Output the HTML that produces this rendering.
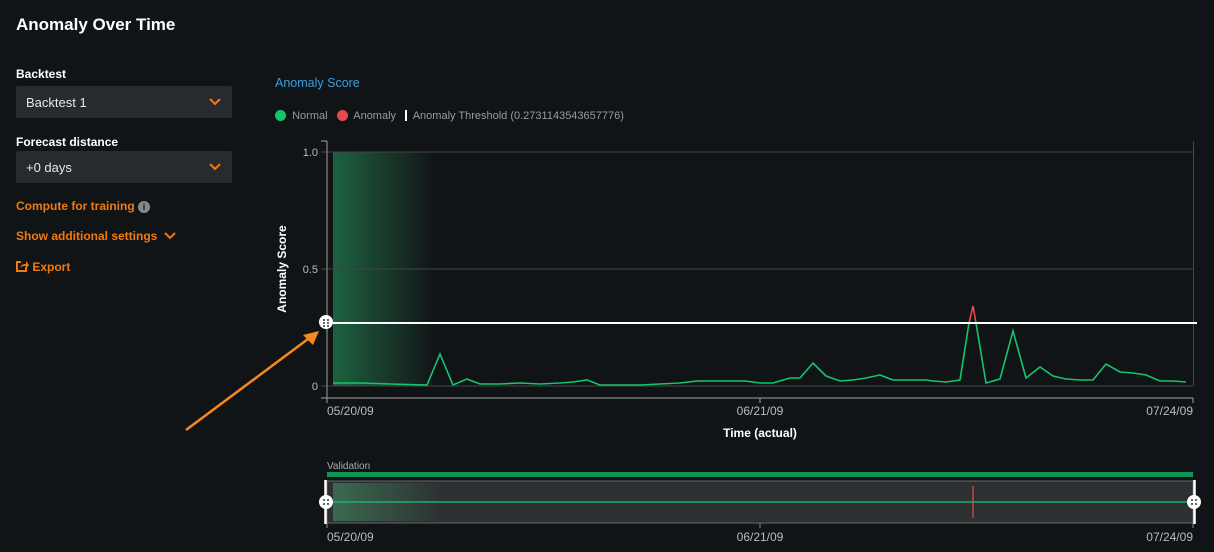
<!DOCTYPE html>
<html><head><meta charset="utf-8"><style>
body{margin:0;width:1214px;height:552px;background:#111417;font-family:"Liberation Sans",sans-serif;overflow:hidden;position:relative;color:#fff}
.a{position:absolute;white-space:nowrap}
.lbl{font-size:12px;font-weight:bold;color:#fff}
.sel{position:absolute;left:16px;width:216px;height:32px;background:#272a2e;border-radius:2px;font-size:13px;color:#e8e8e8}
.sel span{position:absolute;left:10px;top:9px}
.org{color:#f07a10;font-size:12px;font-weight:bold}
</style></head><body>
<div class="a" style="left:16px;top:15px;font-size:17px;font-weight:bold">Anomaly Over Time</div>
<div class="a lbl" style="left:16px;top:67px">Backtest</div>
<div class="sel" style="top:86px"><span>Backtest 1</span><svg style="position:absolute;left:193px;top:12px" width="12" height="8"><path d="M1 1L6 6L11 1" stroke="#f07a10" stroke-width="2" fill="none"/></svg></div>
<div class="a lbl" style="left:16px;top:135px">Forecast distance</div>
<div class="sel" style="top:151px"><span>+0 days</span><svg style="position:absolute;left:193px;top:12px" width="12" height="8"><path d="M1 1L6 6L11 1" stroke="#f07a10" stroke-width="2" fill="none"/></svg></div>
<div class="a org" style="left:16px;top:199px">Compute for training <span style="display:inline-block;width:12px;height:12px;border-radius:6px;background:#888;color:#111;font-size:9px;text-align:center;line-height:12px;vertical-align:0px">i</span></div>
<div class="a org" style="left:16px;top:229px">Show additional settings <svg width="12" height="8" style="margin-left:3px"><path d="M1 1L6 6L11 1" stroke="#f07a10" stroke-width="2" fill="none"/></svg></div>
<div class="a org" style="left:16px;top:260px"><svg width="13" height="12" style="vertical-align:-1px"><path d="M5 2H1V11H10V7" stroke="#f07a10" stroke-width="2" fill="none"/><path d="M4 8C5 5 7 4 10 4V1L13 5L10 9V6C8 6 6 6 4 8Z" fill="#f07a10"/></svg> Export</div>

<div class="a" style="left:275px;top:76px;font-size:12.5px;color:#3a9ee0">Anomaly Score</div>
<div class="a" style="left:275px;top:110px;font-size:11px;color:#9a9a9a">
<span style="display:inline-block;width:11px;height:11px;border-radius:6px;background:#14c46c;vertical-align:-2px"></span>&nbsp; Normal &nbsp;&nbsp;<span style="display:inline-block;width:11px;height:11px;border-radius:6px;background:#e54b4b;vertical-align:-2px"></span>&nbsp; Anomaly &nbsp;&nbsp;<span style="display:inline-block;width:2px;height:11px;background:#fff;vertical-align:-2px"></span>&nbsp; Anomaly Threshold (0.2731143543657776)</div>

<svg class="a" style="left:0;top:0" width="1214" height="552" font-family="Liberation Sans, sans-serif">
<defs>
<linearGradient id="g" x1="0" x2="1"><stop offset="0" stop-color="#1f6a44" stop-opacity=".9"/><stop offset="1" stop-color="#1f6a44" stop-opacity="0"/></linearGradient>
<linearGradient id="g2" x1="0" x2="1"><stop offset="0" stop-color="#3b6a50"/><stop offset="1" stop-color="#2d3033"/></linearGradient>
</defs>
<rect x="333" y="152" width="102" height="234" fill="url(#g)"/>
<g stroke="#444" stroke-width="1">
<line x1="321" y1="152" x2="1193" y2="152"/><line x1="321" y1="269" x2="1193" y2="269"/><line x1="321" y1="386" x2="1193" y2="386"/>
<line x1="1193.5" y1="141" x2="1193.5" y2="386"/>
</g>
<g stroke="#888" stroke-width="1.2">
<line x1="327" y1="141" x2="327" y2="398"/><line x1="321" y1="141" x2="327" y2="141"/><line x1="321" y1="398" x2="1193" y2="398"/>
<line x1="327" y1="398" x2="327" y2="403"/><line x1="760" y1="398" x2="760" y2="403"/><line x1="1193" y1="398" x2="1193" y2="403"/>
</g>
<g fill="#bbb" font-size="11">
<text x="318" y="156" text-anchor="end">1.0</text><text x="318" y="273" text-anchor="end">0.5</text><text x="318" y="390" text-anchor="end">0</text>
</g>
<g fill="#bbb" font-size="12">
<text x="327" y="415">05/20/09</text><text x="760" y="415" text-anchor="middle">06/21/09</text><text x="1193" y="415" text-anchor="end">07/24/09</text>
</g>
<text x="760" y="437" fill="#fff" font-size="12" font-weight="bold" text-anchor="middle">Time (actual)</text>
<text transform="translate(286,269) rotate(-90)" fill="#fff" font-size="12" font-weight="bold" text-anchor="middle">Anomaly Score</text>
<polyline fill="none" stroke="#14c46c" stroke-width="1.6" points="333,383 360,383 390,384 427,385 440,354 453,385 467,379 480,384 500,384 520,383 540,384 560,383 573,382 587,380 600,385 640,385 680,383 697,381 720,381 745,381 760,383 773,383 790,378 800,378 813,363 826,376 840,381 853,380 866,378 880,375 893,380 906,380 926,380 933,381 946,382 960,380 969,323"/>
<polyline fill="none" stroke="#e54b4b" stroke-width="1.6" points="969,323 973,306 976,323"/>
<polyline fill="none" stroke="#14c46c" stroke-width="1.6" points="976,323 986,383 1000,379 1013,331 1026,378 1040,367 1053,376 1066,379 1080,380 1093,380 1106,364 1120,372 1133,373 1146,375 1160,381 1173,381 1186,382"/>
<line x1="327" y1="323" x2="1197" y2="323" stroke="#fff" stroke-width="2"/>
<circle cx="326" cy="322" r="7" fill="#fff"/>
<g fill="#666"><rect x="323" y="319" width="2" height="2"/><rect x="327" y="319" width="2" height="2"/><rect x="323" y="322" width="2" height="2"/><rect x="327" y="322" width="2" height="2"/><rect x="323" y="325" width="2" height="2"/><rect x="327" y="325" width="2" height="2"/></g>
<line x1="186" y1="430" x2="312" y2="336" stroke="#f7891d" stroke-width="2.5"/>
<path d="M319,331 L303,335 L313,345 Z" fill="#f7891d"/>

<text x="327" y="469" fill="#aaa" font-size="10">Validation</text>
<rect x="327" y="472" width="866" height="5" fill="#129657"/>
<rect x="327" y="481" width="866" height="42" fill="#2d3033" stroke="#666" stroke-width="1"/>
<rect x="333" y="483" width="110" height="38" fill="url(#g2)"/>
<line x1="333" y1="502" x2="1193" y2="502" stroke="#1fb06a" stroke-width="1.5"/>
<line x1="973" y1="486" x2="973" y2="518" stroke="#e54b4b" stroke-width="1.2"/>
<line x1="325.5" y1="480" x2="325.5" y2="524" stroke="#fff" stroke-width="2.5"/>
<line x1="1194.5" y1="480" x2="1194.5" y2="524" stroke="#fff" stroke-width="2.5"/>
<circle cx="326" cy="502" r="7" fill="#fff"/><circle cx="1194" cy="502" r="7" fill="#fff"/>
<g fill="#666"><rect x="323" y="499" width="2" height="2"/><rect x="327" y="499" width="2" height="2"/><rect x="323" y="503" width="2" height="2"/><rect x="327" y="503" width="2" height="2"/>
<rect x="1191" y="499" width="2" height="2"/><rect x="1195" y="499" width="2" height="2"/><rect x="1191" y="503" width="2" height="2"/><rect x="1195" y="503" width="2" height="2"/></g>
<g stroke="#888"><line x1="327" y1="523" x2="327" y2="528"/><line x1="760" y1="523" x2="760" y2="528"/><line x1="1193" y1="523" x2="1193" y2="528"/></g>
<g fill="#bbb" font-size="12">
<text x="327" y="541">05/20/09</text><text x="760" y="541" text-anchor="middle">06/21/09</text><text x="1193" y="541" text-anchor="end">07/24/09</text>
</g>
</svg>
</body></html>
